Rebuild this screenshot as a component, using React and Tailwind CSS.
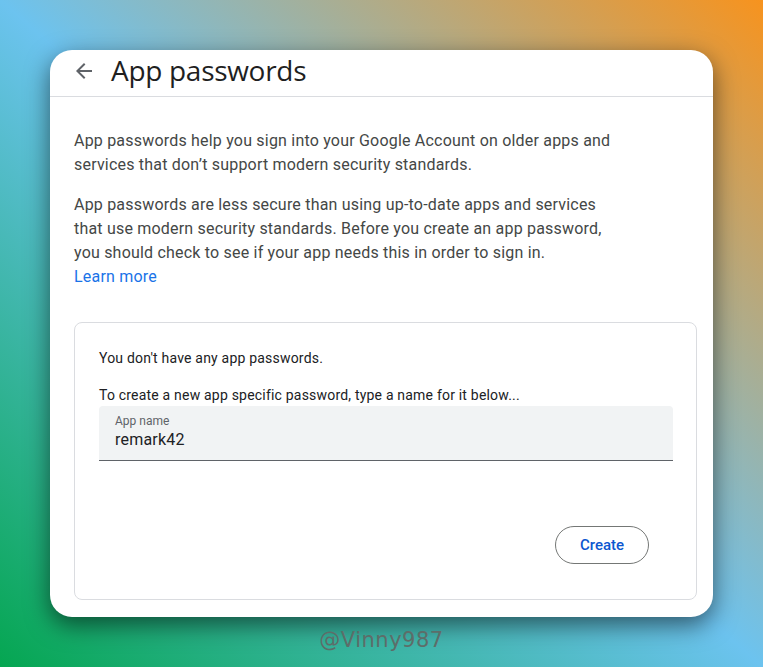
export default function App() {
  return (
    <div className="w-[763px] h-[667px] overflow-hidden flex flex-col items-center pt-[50px] bg-[linear-gradient(to_bottom_left,#f7931e_0%,#6cc3ef_50%,#05a651_100%)]">
      <div className="w-[663px] h-[567px] bg-white rounded-[22px] shadow-[0_8px_24px_rgba(0,0,0,0.55)] overflow-hidden flex flex-col">
        <div className="h-[47px] border-b border-[#dadce0] flex items-center pl-[22px] pb-[7px] shrink-0">
          <svg width="24" height="24" viewBox="0 0 24 24" className="fill-[#5f6368] mt-[3px]">
            <path d="M20 11H7.83l5.59-5.59L12 4l-8 8 8 8 1.41-1.41L7.83 13H20v-2z" />
          </svg>
          <h1 className="ml-[15px] text-[28px] leading-[36px] text-[#1f1f1f] font-['Open_Sans',sans-serif] tracking-[-0.3px]">
            App passwords
          </h1>
        </div>
        <div className="flex-1 flex flex-col pl-[24px] pr-[16px] pt-[32px] pb-[17px] font-['Roboto',sans-serif]">
          <p className="text-[16px] leading-[24px] text-[#444746] max-w-[545px] tracking-[0.2px]">
            App passwords help you sign into your Google Account on older apps and services that don’t support modern security standards.
          </p>
          <p className="mt-[16px] text-[16px] leading-[24px] text-[#444746] max-w-[545px] tracking-[0.2px]">
            App passwords are less secure than using up-to-date apps and services that use modern security standards. Before you create an app password, you should check to see if your app needs this in order to sign in.
          </p>
          <a className="text-[16px] leading-[24px] text-[#1a73e8] self-start tracking-[0.2px]">Learn more</a>
          <div className="mt-[33px] flex-1 border border-[#dadce0] rounded-[8px] pl-[24px] pr-[23px] pt-[25px] flex flex-col">
            <p className="text-[14px] leading-[20px] text-[#202124] tracking-[0.2px]">You don't have any app passwords.</p>
            <p className="mt-[17px] text-[14px] leading-[20px] text-[#202124] tracking-[0.2px]">To create a new app specific password, type a name for it below...</p>
            <div className="mt-[1px] h-[55px] bg-[#f1f3f4] rounded-t-[4px] border-b border-[#5f6368] pl-[16px] flex flex-col pt-[7px]">
              <span className="text-[12px] leading-[16px] text-[#5f6368]">App name</span>
              <span className="text-[16px] leading-[20px] text-[#202124] mt-[1px] tracking-[0.2px]">remark42</span>
            </div>
            <div className="mt-[65px] flex justify-end pr-[24px]">
              <button className="w-[94px] h-[38px] rounded-full border border-[#747775] text-[15px] font-medium text-[#0b57d0] flex items-center justify-center">
                Create
              </button>
            </div>
          </div>
        </div>
      </div>
      <div className="mt-[11px] text-[21px] leading-[24px] text-[#5d6d69] font-['DejaVu_Sans',cursive] tracking-[0.5px]">
        @Vinny987
      </div>
    </div>
  );
}
